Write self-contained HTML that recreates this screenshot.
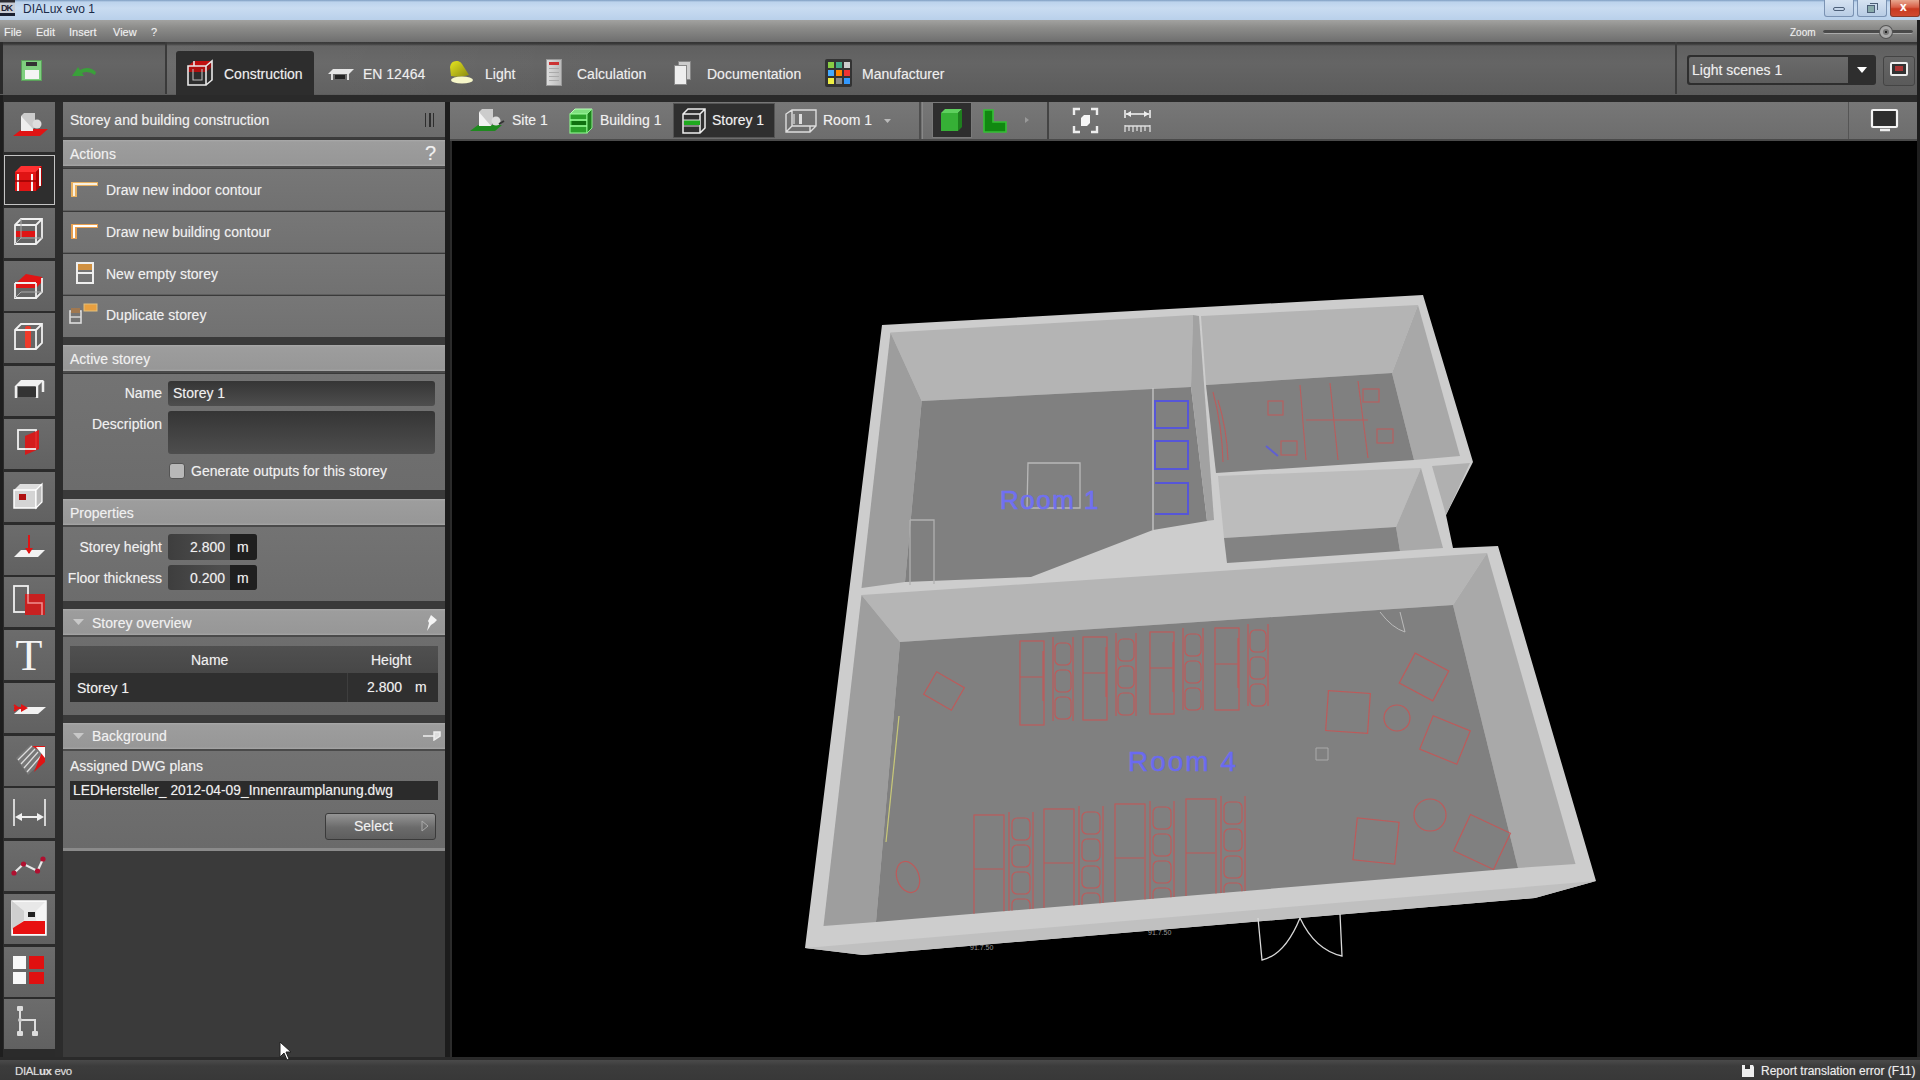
<!DOCTYPE html>
<html><head><meta charset="utf-8">
<style>
*{margin:0;padding:0;box-sizing:border-box}
html,body{width:1920px;height:1080px;overflow:hidden;background:#2b2b2b;font-family:"Liberation Sans",sans-serif;color:#f2f2f2}
.a{position:absolute}
.t{position:absolute;white-space:nowrap;color:#f0f0f0;line-height:1.15;text-shadow:0 0 1px rgba(255,255,255,.35)}
#title{left:0;top:0;width:1920px;height:20px;background:linear-gradient(#7d9cc0 0,#bcd3ec 2px,#c9dcf1 40%,#b9d0ea 100%)}
#menu{left:0;top:20px;width:1920px;height:22px;background:linear-gradient(#a2a2a0,#8c8c8a 35%,#6e6e6e 100%)}
#tool{left:0;top:42px;width:1920px;height:53px;background:linear-gradient(#333 0,#3a3a3a 2px,#606060 4px,#656565 40%,#5c5c5c 100%)}
#gap{left:0;top:95px;width:1920px;height:7px;background:#2a2a2a}
.ib{position:absolute;left:4px;width:51px;height:50px;background:linear-gradient(#6c6c6c,#616161)}
</style></head><body>
<!-- TITLE BAR -->
<div id="title" class="a">
  <div class="a" style="left:0;top:0;width:15px;height:16px;background:linear-gradient(#2a2a30 0,#2a2a30 2px,#c8ccd4 3px,#c8ccd4 13px,#1a2030 13px)"></div>
  <div class="t" style="left:1px;top:3px;font-size:9px;font-weight:bold;color:#223;text-shadow:none;letter-spacing:-1px">DK</div>
  <div class="t" style="left:23px;top:3px;font-size:12px;color:#1a2a48;text-shadow:none">DIALux evo 1</div>
  <div class="a" style="left:1824px;top:0;width:30px;height:17px;border:1px solid #7a92b2;border-top:none;border-radius:0 0 3px 3px;background:linear-gradient(#d6e3f2,#b8cce4)"></div>
  <div class="a" style="left:1833px;top:7px;width:12px;height:4px;border:1.5px solid #4c5f78;border-radius:2px"></div>
  <div class="a" style="left:1857px;top:0;width:30px;height:17px;border:1px solid #7a92b2;border-top:none;border-radius:0 0 3px 3px;background:linear-gradient(#d6e3f2,#b8cce4)"></div>
  <div class="a" style="left:1867px;top:5px;width:8px;height:8px;border:1.5px solid #4c5f78;background:#8aa"></div>
  <div class="a" style="left:1870px;top:3px;width:8px;height:7px;border:1.5px solid #4c5f78;border-left:none;border-bottom:none"></div>
  <div class="a" style="left:1890px;top:0;width:30px;height:17px;border:1px solid #8a3a2a;border-top:none;border-radius:0 0 3px 3px;background:linear-gradient(#e8a890,#d86048 45%,#c83a20 55%,#d04a30)"></div>
  <div class="t" style="left:1900px;top:1px;font-size:12px;font-weight:bold;color:#fff">x</div>
</div>
<!-- MENU -->
<div id="menu" class="a">
  <div class="t" style="left:4px;top:6px;font-size:11px">File</div>
  <div class="t" style="left:36px;top:6px;font-size:11px">Edit</div>
  <div class="t" style="left:69px;top:6px;font-size:11px">Insert</div>
  <div class="t" style="left:113px;top:6px;font-size:11px">View</div>
  <div class="t" style="left:151px;top:6px;font-size:11px">?</div>
  <div class="t" style="left:1790px;top:7px;font-size:10px;color:#eee">Zoom</div>
  <div class="a" style="left:1823px;top:10px;width:90px;height:4px;border-radius:2px;background:#4a4a4a;border-bottom:1px solid #aaa"></div>
  <div class="a" style="left:1880px;top:6px;width:12px;height:12px;border-radius:50%;background:#777;border:3px solid #aaa;box-shadow:0 0 0 1px #555"></div><div class="a" style="left:1885px;top:11px;width:2px;height:2px;background:#222"></div>
</div>
<!-- TOOLBAR -->
<div id="tool" class="a">
  <div class="a" style="left:0;top:0;width:3px;height:52px;background:#2a2a2a"></div>
  <div class="a" style="left:165px;top:0;width:2px;height:52px;background:#3a3a3a"></div>
  <div class="a" style="left:167px;top:0;width:1508px;height:52px;background:linear-gradient(90deg,rgba(255,255,255,.05),rgba(255,255,255,0) 30%)"></div>
  <div class="a" style="left:1675px;top:0;width:2px;height:52px;background:#3c3c3c"></div>
  <!-- save -->
  <div class="a" style="left:21px;top:18px;width:21px;height:21px;background:#7fd07f;border:1px solid #5aa05a"></div>
  <div class="a" style="left:26px;top:20px;width:11px;height:4px;background:#333"></div>
  <div class="a" style="left:25px;top:28px;width:14px;height:9px;background:#f4f4f4"></div>
  <!-- undo -->
  <svg class="a" style="left:71px;top:22px" width="28" height="14"><path d="M1 12 L7 3 L9 6 Q18 1 25 8 L24 11 Q17 6 11 9 L13 12 Z" fill="#3aa03a"/></svg>
  <!-- construction tab -->
  <div class="a" style="left:176px;top:9px;width:138px;height:44px;background:#2d2d2d;border-radius:3px 3px 0 0"></div>
  <svg class="a" style="left:185px;top:17px" width="30" height="30"><path d="M3 7 L9 2 H27 L21 7Z" fill="#c01010"/><rect x="3" y="7" width="18" height="6" fill="#b01010"/><path d="M21 7 L27 2 V8 L21 13Z" fill="#901010"/><path d="M3 7 H21 V26 H3Z M21 7 L27 2 V21 L21 26 M9 2 V7" fill="none" stroke="#e8e8e8" stroke-width="1.6"/><path d="M8 10 V21 H17 V10" fill="none" stroke="#bbb" stroke-width="1.1"/></svg>
  <div class="t" style="left:224px;top:24px;font-size:14px;color:#eee">Construction</div>
  <!-- EN 12464 -->
  <svg class="a" style="left:327px;top:24px" width="28" height="16"><path d="M1 8 L6 3 L27 3 L22 8 Z" fill="#e6e6e6"/><path d="M5 8 v6 M21 8 v6" stroke="#ddd" stroke-width="2"/><rect x="8" y="9" width="10" height="4" fill="#222"/></svg>
  <div class="t" style="left:363px;top:24px;font-size:14px;color:#eee">EN 12464</div>
  <!-- Light -->
  <svg class="a" style="left:447px;top:17px" width="30" height="30"><defs><linearGradient id="lg1" x1="0" y1="0" x2="1" y2="1"><stop offset="0" stop-color="#e6e620"/><stop offset="1" stop-color="#8a8a10"/></linearGradient></defs><path d="M3 8 Q4 1 11 2 Q14 3 15 5 L22 16 Q14 19 4 17 Z" fill="url(#lg1)"/><ellipse cx="15" cy="21" rx="11" ry="3.6" fill="#f6f6c8"/></svg>
  <div class="t" style="left:485px;top:24px;font-size:14px;color:#eee">Light</div>
  <!-- Calculation -->
  <div class="a" style="left:546px;top:17px;width:16px;height:27px;background:linear-gradient(90deg,#ddd,#bbb);border:1px solid #999"></div>
  <div class="a" style="left:549px;top:20px;width:10px;height:3px;background:#c33"></div>
  <div class="a" style="left:549px;top:26px;width:10px;height:15px;background:repeating-linear-gradient(#aaa 0 1px,transparent 1px 4px)"></div>
  <div class="t" style="left:577px;top:24px;font-size:14px;color:#eee">Calculation</div>
  <!-- Documentation -->
  <div class="a" style="left:678px;top:19px;width:13px;height:19px;background:#ccc;border:1px solid #888"></div>
  <div class="a" style="left:674px;top:23px;width:13px;height:20px;background:#eee;border:1px solid #888"></div>
  <div class="t" style="left:707px;top:24px;font-size:14px;color:#eee">Documentation</div>
  <!-- Manufacturer -->
  <div class="a" style="left:825px;top:17px;width:27px;height:28px;background:#333;border-radius:2px"></div>
  <svg class="a" style="left:827px;top:19px" width="24" height="24"><rect x="1" y="1" width="6" height="6" fill="#8c4"/><rect x="9" y="1" width="6" height="6" fill="#4a8"/><rect x="17" y="1" width="6" height="6" fill="#ccc"/><rect x="1" y="9" width="6" height="6" fill="#4af"/><rect x="9" y="9" width="6" height="6" fill="#f80"/><rect x="17" y="9" width="6" height="6" fill="#e33"/><rect x="1" y="17" width="6" height="6" fill="#ee4"/><rect x="9" y="17" width="6" height="6" fill="#888"/><rect x="17" y="17" width="6" height="6" fill="#39f"/></svg>
  <div class="t" style="left:862px;top:24px;font-size:14px;color:#eee">Manufacturer</div>
  <!-- Light scenes -->
  <div class="a" style="left:1687px;top:13px;width:189px;height:30px;background:#2e2e2e;border-radius:3px"></div>
  <div class="a" style="left:1689px;top:15px;width:159px;height:26px;background:linear-gradient(#6a6a6a,#5e5e5e);border-radius:2px 0 0 2px"></div>
  <div class="t" style="left:1692px;top:20px;font-size:14px;color:#eee">Light scenes 1</div>
  <svg class="a" style="left:1856px;top:24px" width="12" height="8"><path d="M1 1 H11 L6 7Z" fill="#fff"/></svg>
  <div class="a" style="left:1883px;top:14px;width:32px;height:30px;background:linear-gradient(#666,#5a5a5a);border:1px solid #444;border-radius:3px"></div>
  <div class="a" style="left:1890px;top:20px;width:18px;height:14px;border:2px solid #eee;background:#333;border-radius:2px"></div>
  <div class="a" style="left:1895px;top:24px;width:8px;height:5px;background:#a33"></div>
</div>
<div id="gap" class="a"></div>
<div class="a" style="left:0;top:95px;width:3px;height:965px;background:#1e1e1e"></div>
<div class="ib" style="top:102px"></div>
<div class="ib" style="top:155px;background:#2e2e2e;border:1px solid #c4c4c4"></div>
<div class="ib" style="top:208px"></div>
<div class="ib" style="top:261px"></div>
<div class="ib" style="top:313px"></div>
<div class="ib" style="top:366px"></div>
<div class="ib" style="top:419px"></div>
<div class="ib" style="top:472px"></div>
<div class="ib" style="top:525px"></div>
<div class="ib" style="top:577px"></div>
<div class="ib" style="top:630px"></div>
<div class="ib" style="top:683px"></div>
<div class="ib" style="top:736px"></div>
<div class="ib" style="top:788px"></div>
<div class="ib" style="top:841px"></div>
<div class="ib" style="top:894px"></div>
<div class="ib" style="top:947px"></div>
<div class="ib" style="top:999px"></div>
<svg class="a" style="left:0;top:0" width="60" height="1060">
<g transform="translate(4,102)"><path d="M9 34 L18 27 L44 27 L36 34 Z" fill="#e01414"/><rect x="17" y="14" width="12" height="15" fill="#eee"/><path d="M17 14 l3 -3 h11 v13 l-2 3" fill="#ccc"/><circle cx="33" cy="22" r="4.5" fill="#ddd"/></g>
<g transform="translate(4,155)"><path d="M11 17 L17 11 L38 11 L32 17Z" fill="#ff3030"/><rect x="11" y="17" width="21" height="19" fill="#e01414"/><path d="M32 17 L38 11 V30 L32 36Z" fill="#a00"/><path d="M14 19 V36 M28 19 V36 M36 13 V31" stroke="#f4f4f4" stroke-width="2"/><path d="M11 26 H32" stroke="#900" stroke-width="1.5"/></g>
<g transform="translate(4,208)"><rect x="11" y="23" width="21" height="6" fill="#e01414"/><path d="M11 17 L17 11 H38 V30 L32 36 H11 Z M11 17 H32 V36 M32 17 L38 11" fill="none" stroke="#f0f0f0" stroke-width="1.8"/><path d="M17 11 V30 H38 M17 30 L11 36" fill="none" stroke="#aaa" stroke-width="1"/></g>
<g transform="translate(4,261)"><path d="M11 23 L22 13 L38 16 V21 L32 27 H11Z" fill="#e01414"/><path d="M11 22 V37 H32 V22 M32 37 L38 31 V17 M11 22 H32" fill="none" stroke="#f0f0f0" stroke-width="1.8"/><path d="M17 31 H38 M17 31 L11 37" fill="none" stroke="#aaa" stroke-width="1"/></g>
<g transform="translate(4,313)"><rect x="21" y="13" width="6" height="22" rx="2" fill="#ee3a2a"/><path d="M11 17 L17 11 H38 V30 L32 36 H11 Z M11 17 H32 V36 M32 17 L38 11" fill="none" stroke="#f0f0f0" stroke-width="1.8"/></g>
<g transform="translate(4,366)"><path d="M11 20 L17 14 H40 L34 20Z" fill="#f0f0f0"/><path d="M12 20 V32 M33 20 V32 M39 15 V26" stroke="#eee" stroke-width="2.5"/><path d="M14 21 H32 V31 H14Z" fill="#333"/></g>
<g transform="translate(4,419)"><rect x="14" y="11" width="18" height="19" fill="none" stroke="#f0f0f0" stroke-width="1.8"/><path d="M21 17 L35 11 V30 L21 36Z" fill="#e01414" opacity=".9"/><path d="M14 30 H32" stroke="#f0f0f0" stroke-width="1.8"/></g>
<g transform="translate(4,472)"><path d="M10 18 L16 12 H38 L32 18Z" fill="#ddd"/><rect x="10" y="18" width="22" height="18" fill="#d4d4d4" stroke="#fff" stroke-width="1.5"/><path d="M32 18 L38 12 V30 L32 36Z" fill="#bbb" stroke="#fff" stroke-width="1.2"/><rect x="15" y="22" width="7" height="6" fill="#b01010"/></g>
<g transform="translate(4,525)"><path d="M10 32 L17 25 H41 L34 32Z" fill="#f2f2f2"/><path d="M25 10 V28" stroke="#e01414" stroke-width="2"/><path d="M21 23 L25 29 L29 23Z" fill="#e01414"/></g>
<g transform="translate(4,577)"><rect x="10" y="9" width="14" height="26" fill="none" stroke="#f0f0f0" stroke-width="1.8"/><rect x="21" y="17" width="20" height="21" fill="#c82020"/><path d="M24 17 V26 H38 V38" fill="none" stroke="#f09090" stroke-width="1.5"/></g>
<g transform="translate(4,630)"><text x="25" y="40" font-family="Liberation Serif" font-size="44" fill="#f4f4f4" text-anchor="middle">T</text></g>
<g transform="translate(4,683)"><path d="M10 31 L18 24 H42 L34 31Z" fill="#f2f2f2"/><path d="M10 25 L20 25" stroke="#e01414" stroke-width="2.2"/><path d="M17 21 L24 25 L17 29Z" fill="#e01414"/><path d="M10 22 L14 25 L10 28" fill="none" stroke="#e01414" stroke-width="2"/></g>
<g transform="translate(4,736)"><path d="M12 22 L26 9 L40 12 L38 26 L24 39Z" fill="#777"/><path d="M14 24 L28 10 M17 28 L31 13 M20 32 L34 16 M23 36 L37 20" stroke="#ddd" stroke-width="1.3"/><path d="M28 10 H41 V26 L30 36 L38 16Z" fill="#e01414"/><path d="M32 11 H41 V22Z" fill="#fafafa"/></g>
<g transform="translate(4,788)"><path d="M10 11 V38 M41 11 V38" stroke="#f0f0f0" stroke-width="1.6"/><path d="M13 29 H38" stroke="#f0f0f0" stroke-width="2"/><path d="M11 29 L18 25 V33Z M40 29 L33 25 V33Z" fill="#f0f0f0"/></g>
<g transform="translate(4,841)"><path d="M10 32 L19.5 23 L33.5 30 L39 18" fill="none" stroke="#e8e8e8" stroke-width="2.2"/><circle cx="10" cy="32" r="2.6" fill="#b01030"/><circle cx="19.5" cy="23" r="2.6" fill="#b01030"/><circle cx="33.5" cy="30" r="2.6" fill="#b01030"/><circle cx="39" cy="18" r="2.6" fill="#b01030"/></g>
<g transform="translate(4,894)"><rect x="8" y="7" width="34" height="34" fill="#e8e8e8" stroke="#fff" stroke-width="1.5"/><path d="M8 7 L20 17 V26 L8 36Z" fill="#cfcfcf"/><path d="M42 7 L32 17 V26 L42 36Z" fill="#f5f5f5"/><rect x="24" y="18" width="7" height="5" fill="#222"/><path d="M9 34 L20 27 H41 V40 H9Z" fill="#e81010"/></g>
<g transform="translate(4,947)"><rect x="9" y="9" width="13" height="13" fill="#f8f8f8"/><rect x="9" y="25" width="13" height="12" fill="#f8f8f8"/><rect x="25" y="9" width="15" height="13" fill="#e01010"/><rect x="25" y="25" width="15" height="12" fill="#e01010"/></g>
<g transform="translate(4,999)"><path d="M16 10 V36 M16 21 H31 V34" fill="none" stroke="#ddd" stroke-width="2"/><rect x="13" y="7" width="6" height="5" rx="1" fill="#ddd"/><rect x="13" y="32" width="6" height="5" rx="1" fill="#ddd"/><rect x="28" y="32" width="6" height="5" rx="1" fill="#ddd"/><circle cx="16" cy="21" r="2" fill="#ccc"/></g>
</svg><!-- PANEL -->
<div class="a" style="left:55px;top:102px;width:8px;height:955px;background:#2c2c2c"></div>
<div class="a" style="left:63px;top:102px;width:382px;height:955px;background:#3a3a3a"></div>
<div class="a" style="left:445px;top:102px;width:5px;height:955px;background:#1c1c1c"></div>
<!-- title -->
<div class="a" style="left:63px;top:102px;width:382px;height:37px;background:linear-gradient(#767676,#6c6c6c);border-bottom:2px solid #3c3c3c"></div>
<div class="t" style="left:70px;top:112px;font-size:14px">Storey and building construction</div>
<div class="a" style="left:425px;top:113px;width:9px;height:14px;border-left:1.5px solid #2e2e2e;border-right:1.5px solid #2e2e2e"></div>
<div class="a" style="left:429px;top:113px;width:1.5px;height:14px;background:#2e2e2e"></div>
<!-- actions -->
<div class="a" style="left:63px;top:140px;width:382px;height:28px;background:linear-gradient(#aaaaaa 0,#9d9d9d 2px,#979797 92%,#a6a6a6 100%);border-bottom:2px solid #4a4a4a"></div>
<div class="t" style="left:70px;top:146px;font-size:14px">Actions</div>
<div class="t" style="left:425px;top:142px;font-size:20px;color:#f0f0f0">?</div>
<div class="a" style="left:63px;top:169px;width:382px;height:42px;background:linear-gradient(#777,#717171);border-bottom:1px solid #5e5e5e"></div>
<div class="a" style="left:63px;top:212px;width:382px;height:41px;background:linear-gradient(#777,#717171);border-bottom:1px solid #5e5e5e"></div>
<div class="a" style="left:63px;top:254px;width:382px;height:41px;background:linear-gradient(#777,#717171);border-bottom:1px solid #5e5e5e"></div>
<div class="a" style="left:63px;top:296px;width:382px;height:41px;background:linear-gradient(#777,#717171)"></div>
<svg class="a" style="left:68px;top:178px" width="32" height="150">
  <path d="M3 4 H30 V8 H9 V19 H3Z" fill="#e8b060"/><path d="M5 5 H29 V7 H7 V18 H5Z" fill="#f8f0e0"/>
  <path d="M3 46 H30 V50 H9 V61 H3Z" fill="#e8a050"/><path d="M5 47 H29 V49 H7 V60 H5Z" fill="#fff"/>
  <rect x="9" y="85" width="16" height="20" fill="none" stroke="#eee" stroke-width="2"/><rect x="10" y="86" width="14" height="6" fill="#d09040"/><path d="M10 95 H24" stroke="#eee" stroke-width="2"/>
  <rect x="2" y="133" width="11" height="12" fill="none" stroke="#ddd" stroke-width="1.6"/><rect x="3" y="130" width="9" height="5" fill="#a07850"/><path d="M2 139 H13" stroke="#ddd" stroke-width="1.4"/><rect x="16" y="126" width="13" height="7" fill="#e8a040" stroke="#e0c080" stroke-width="1"/>
</svg>
<div class="t" style="left:106px;top:182px;font-size:14px">Draw new indoor contour</div>
<div class="t" style="left:106px;top:224px;font-size:14px">Draw new building contour</div>
<div class="t" style="left:106px;top:266px;font-size:14px">New empty storey</div>
<div class="t" style="left:106px;top:307px;font-size:14px">Duplicate storey</div>
<!-- active storey -->
<div class="a" style="left:63px;top:345px;width:382px;height:28px;background:linear-gradient(#aaaaaa 0,#9d9d9d 2px,#979797 92%,#a6a6a6 100%);border-bottom:2px solid #4a4a4a"></div>
<div class="t" style="left:70px;top:351px;font-size:14px">Active storey</div>
<div class="a" style="left:63px;top:374px;width:382px;height:116px;background:linear-gradient(#737373,#6c6c6c)"></div>
<div class="t" style="left:63px;top:385px;width:99px;text-align:right;font-size:14px">Name</div>
<div class="a" style="left:168px;top:381px;width:267px;height:25px;border-radius:3px;background:linear-gradient(#353535,#4e4e4e)"></div>
<div class="t" style="left:173px;top:385px;font-size:14px">Storey 1</div>
<div class="t" style="left:63px;top:416px;width:99px;text-align:right;font-size:14px">Description</div>
<div class="a" style="left:168px;top:411px;width:267px;height:43px;border-radius:3px;background:linear-gradient(#353535,#4e4e4e)"></div>
<div class="a" style="left:169px;top:463px;width:16px;height:16px;border-radius:3px;background:#b8b8b8;border:1px solid #555"></div>
<div class="t" style="left:191px;top:463px;font-size:14px">Generate outputs for this storey</div>
<!-- properties -->
<div class="a" style="left:63px;top:499px;width:382px;height:28px;background:linear-gradient(#aaaaaa 0,#9d9d9d 2px,#979797 92%,#a6a6a6 100%);border-bottom:2px solid #4a4a4a"></div>
<div class="t" style="left:70px;top:505px;font-size:14px">Properties</div>
<div class="a" style="left:63px;top:527px;width:382px;height:74px;background:linear-gradient(#737373,#6c6c6c)"></div>
<div class="t" style="left:63px;top:539px;width:99px;text-align:right;font-size:14px">Storey height</div>
<div class="a" style="left:168px;top:534px;width:89px;height:26px;border-radius:3px;background:linear-gradient(90deg,#3e3e3e,#4e4e4e 60%)"></div>
<div class="a" style="left:230px;top:534px;width:27px;height:26px;border-radius:0 3px 3px 0;background:#1f1f1f"></div>
<div class="t" style="left:168px;top:539px;width:57px;text-align:right;font-size:14px">2.800</div>
<div class="t" style="left:237px;top:539px;font-size:14px">m</div>
<div class="t" style="left:63px;top:570px;width:99px;text-align:right;font-size:14px">Floor thickness</div>
<div class="a" style="left:168px;top:565px;width:89px;height:25px;border-radius:3px;background:linear-gradient(90deg,#3e3e3e,#4e4e4e 60%)"></div>
<div class="a" style="left:230px;top:565px;width:27px;height:25px;border-radius:0 3px 3px 0;background:#1f1f1f"></div>
<div class="t" style="left:168px;top:570px;width:57px;text-align:right;font-size:14px">0.200</div>
<div class="t" style="left:237px;top:570px;font-size:14px">m</div>
<!-- storey overview -->
<div class="a" style="left:63px;top:609px;width:382px;height:28px;background:linear-gradient(#aaaaaa 0,#9d9d9d 2px,#979797 92%,#a6a6a6 100%);border-bottom:2px solid #4a4a4a"></div>
<svg class="a" style="left:73px;top:619px" width="12" height="8"><path d="M0 0 H11 L5.5 6Z" fill="#c8c8c8"/></svg>
<div class="t" style="left:92px;top:615px;font-size:14px">Storey overview</div>
<svg class="a" style="left:423px;top:614px" width="16" height="20"><path d="M8 1 L14 6 L11 9 L8 11 L4 17 L6 9 L5 7Z" fill="#f4f4f4"/></svg>
<div class="a" style="left:63px;top:637px;width:382px;height:78px;background:linear-gradient(#6e6e6e,#666)"></div>
<div class="a" style="left:70px;top:646px;width:368px;height:27px;background:linear-gradient(#505050,#474747)"></div>
<div class="t" style="left:191px;top:652px;font-size:14px">Name</div>
<div class="t" style="left:371px;top:652px;font-size:14px">Height</div>
<div class="a" style="left:70px;top:673px;width:368px;height:29px;background:#2f2f2f"></div>
<div class="a" style="left:347px;top:673px;width:1px;height:29px;background:#3e3e3e"></div>
<div class="t" style="left:77px;top:680px;font-size:14px">Storey 1</div>
<div class="t" style="left:367px;top:679px;font-size:14px">2.800</div>
<div class="t" style="left:415px;top:679px;font-size:14px">m</div>
<!-- background -->
<div class="a" style="left:63px;top:723px;width:382px;height:28px;background:linear-gradient(#aaaaaa 0,#9d9d9d 2px,#979797 92%,#a6a6a6 100%);border-bottom:2px solid #4a4a4a"></div>
<svg class="a" style="left:73px;top:733px" width="12" height="8"><path d="M0 0 H11 L5.5 6Z" fill="#c8c8c8"/></svg>
<div class="t" style="left:92px;top:728px;font-size:14px">Background</div>
<svg class="a" style="left:422px;top:731px" width="20" height="10"><path d="M1 5 H12 M12 1 V9 L18 5 V1 Z" stroke="#eee" stroke-width="1.5" fill="#ddd"/></svg>
<div class="a" style="left:63px;top:751px;width:382px;height:97px;background:linear-gradient(#727272,#6a6a6a)"></div>
<div class="t" style="left:70px;top:758px;font-size:14px">Assigned DWG plans</div>
<div class="a" style="left:70px;top:781px;width:368px;height:19px;background:#2b2b2b"></div>
<div class="t" style="left:73px;top:783px;font-size:13.8px">LEDHersteller_ 2012-04-09_Innenraumplanung.dwg</div>
<div class="a" style="left:325px;top:813px;width:111px;height:27px;border-radius:3px;border:1px solid #3a3a3a;background:linear-gradient(#959595,#6a6a6a 55%,#5e5e5e)"></div>
<div class="t" style="left:354px;top:818px;font-size:14px">Select</div>
<svg class="a" style="left:421px;top:820px" width="8" height="12"><path d="M1 1 L7 6 L1 11Z" fill="none" stroke="#aaa" stroke-width="1"/></svg>
<div class="a" style="left:63px;top:848px;width:382px;height:3px;background:#8a8a8a"></div>
<!-- VIEWPORT TOOLBAR -->
<div class="a" style="left:450px;top:102px;width:1467px;height:37px;background:linear-gradient(#777,#6d6d6d)"></div>
<div class="a" style="left:450px;top:139px;width:1467px;height:2px;background:#4a4a4a"></div>
<div class="a" style="left:1917px;top:20px;width:3px;height:1037px;background:#1e1e1e"></div>
<!-- site -->
<svg class="a" style="left:468px;top:107px" width="40" height="28"><path d="M2 24 L10 18 H34 L27 24Z" fill="#1f8a1f"/><rect x="11" y="5" width="12" height="14" fill="#f2f2f2"/><path d="M11 5 l3 -3 h11 v13 l-2 4" fill="#ccc"/><circle cx="28" cy="14" r="4.5" fill="#ddd"/><path d="M31 17 L36 14" stroke="#333" stroke-width="2"/></svg>
<div class="t" style="left:512px;top:112px;font-size:14px">Site 1</div>
<!-- building -->
<svg class="a" style="left:567px;top:107px" width="28" height="28"><path d="M3 7 L8 2 H25 L20 7Z" fill="#7fe07f" stroke="#bfb" stroke-width="1"/><rect x="3" y="7" width="17" height="19" fill="#2aa02a" stroke="#8e8" stroke-width="1.2"/><path d="M20 7 L25 2 V21 L20 26Z" fill="#1d801d" stroke="#8e8" stroke-width="1"/><path d="M3 13 H20 M3 19 H20" stroke="#9f9" stroke-width="1.3"/><rect x="5" y="14" width="14" height="4" fill="#107010"/></svg>
<div class="t" style="left:600px;top:112px;font-size:14px">Building 1</div>
<!-- storey (selected) -->
<div class="a" style="left:673px;top:103px;width:102px;height:35px;background:#2f2f2f;border:1px solid #555"></div>
<svg class="a" style="left:680px;top:107px" width="28" height="28"><path d="M3 7 L8 2 H25 V21 L20 26 H3Z M3 7 H20 V26 M20 7 L25 2" fill="none" stroke="#eee" stroke-width="1.5"/><rect x="4" y="13" width="16" height="5" fill="#1eaa1e"/><path d="M3 13 H20 M3 19 H20" stroke="#ddd" stroke-width="1"/></svg>
<div class="t" style="left:712px;top:112px;font-size:14px">Storey 1</div>
<!-- room -->
<svg class="a" style="left:784px;top:108px" width="34" height="26"><path d="M2 6 L8 2 H32 V18 L26 24 H2Z M2 6 V24 M26 18 V24 M8 2 V18 H32 M8 18 L2 24" fill="none" stroke="#ddd" stroke-width="1.4"/><rect x="15" y="6" width="3" height="10" fill="#ddd"/><path d="M10 6 V16" stroke="#ddd" stroke-width="1.2"/></svg>
<div class="t" style="left:823px;top:112px;font-size:14px">Room 1</div>
<svg class="a" style="left:884px;top:119px" width="8" height="5"><path d="M0 0 H7 L3.5 4Z" fill="#bbb"/></svg>
<div class="a" style="left:919px;top:102px;width:2px;height:37px;background:#4e4e4e"></div>
<div class="a" style="left:922px;top:102px;width:1px;height:37px;background:#888"></div>
<!-- green cube -->
<div class="a" style="left:932px;top:102px;width:40px;height:36px;background:#2e2e2e;border:1px solid #7a7a7a"></div>
<svg class="a" style="left:938px;top:107px" width="28" height="26"><path d="M3 6 L7 2 H24 L20 6Z" fill="#5ed05e"/><rect x="3" y="6" width="17" height="18" fill="#36b036"/><path d="M20 6 L24 2 V20 L20 24Z" fill="#1e801e"/></svg>
<svg class="a" style="left:982px;top:108px" width="28" height="26"><path d="M2 2 H11 V14 H24 V24 H2Z" fill="#118811" stroke="#35c035" stroke-width="1.6"/></svg>
<svg class="a" style="left:1024px;top:116px" width="6" height="8"><path d="M1 1 L5 4 L1 7Z" fill="#999"/></svg>
<div class="a" style="left:1047px;top:102px;width:2px;height:37px;background:#444"></div>
<!-- fullscreen -->
<svg class="a" style="left:1072px;top:107px" width="27" height="27"><path d="M2 8 V2 H8 M19 2 H25 V8 M25 19 V25 H19 M8 25 H2 V19" fill="none" stroke="#eee" stroke-width="2.4"/><path d="M9 11 L12 8 H18 V16 L15 19 H9Z" fill="#f6f6f6"/></svg>
<!-- ruler -->
<svg class="a" style="left:1123px;top:108px" width="30" height="26"><path d="M3 6 H26" stroke="#eee" stroke-width="1.6"/><path d="M2 2 V10 M27 2 V10" stroke="#eee" stroke-width="1.6"/><path d="M3 6 L8 3 V9Z M26 6 L21 3 V9Z" fill="#eee"/><path d="M2 18 H27 M2 17 V24 M6 18 V23 M10 18 V24 M14 18 V23 M18 18 V24 M22 18 V23 M27 17 V24" stroke="#ddd" stroke-width="1.3" fill="none"/></svg>
<div class="a" style="left:1848px;top:102px;width:1px;height:37px;background:#555"></div>
<svg class="a" style="left:1870px;top:108px" width="30" height="26"><rect x="2" y="2" width="25" height="17" fill="#2e2e2e" stroke="#f4f4f4" stroke-width="2.2" rx="1"/><path d="M10 22 H20" stroke="#eee" stroke-width="2.5"/></svg>
<!-- STATUS BAR -->
<div class="a" style="left:0;top:1057px;width:1920px;height:3px;background:#2a2a2a"></div>
<div class="a" style="left:0;top:1060px;width:1920px;height:20px;background:linear-gradient(#4a4a4a,#3c3c3c 30%,#383838)"></div>
<div class="t" style="left:15px;top:1065px;font-size:11.5px;color:#ddd;letter-spacing:-0.4px">DIAL<b>ux</b> evo</div>
<svg class="a" style="left:1741px;top:1064px" width="14" height="14"><path d="M1 1 H12 L13 3 V13 H1Z" fill="#eee"/><rect x="4" y="1" width="5" height="4" fill="#333"/></svg>
<div class="t" style="left:1761px;top:1065px;font-size:12px;color:#eee">Report translation error (F11)</div>
<div class="a" style="left:452px;top:141px;width:1465px;height:916px;background:#000"></div>
<svg class="a" style="left:0;top:0" width="1920" height="1080">
<polygon points="882,325 1423,295 1473,462 1446,515 1453,548 1498,546 1596,881 1535,898 863,955 805,948" fill="#cdcdcd" />
<polygon points="805,948 1596,881 1535,898 863,955" fill="#c0c0c0" />
<polygon points="890.5,332.5 1193,315 1191,387 921.7,401" fill="#b4b4b4" />
<polygon points="890.5,332.5 921.7,401 905,582 861.5,588" fill="#9d9d9d" />
<polygon points="921.7,401 1191,387 1207,521 1153,530 1031,577 905,582" fill="#808080" />
<polygon points="1193,315 1199,316 1214,520 1207,521 1191,387" fill="#a2a2a2" />
<polygon points="1201,316 1418,305 1392,373 1206,385" fill="#b4b4b4" />
<polygon points="1418,305 1460,456 1414,460 1392,373" fill="#a8a8a8" />
<polygon points="1206,385 1392,373 1414,460 1216,473" fill="#808080" />
<polygon points="1432,466 1470,463 1446,515" fill="#b0b0b0" />
<polygon points="1218,476 1421,468 1396,527 1224,538" fill="#bcbcbc" />
<polygon points="1421,468 1443,548 1400,551 1396,527" fill="#a9a9a9" />
<polygon points="1224,538 1396,527 1400,551 1227,563" fill="#838383" />
<polygon points="861.5,595 1487,553 1453,605 900,642" fill="#b5b5b5" />
<polygon points="861.5,595 900,642 876,922 823.5,926" fill="#9e9e9e" />
<polygon points="1487,553 1575.5,864 1518,868 1453,605" fill="#a9a9a9" />
<polygon points="900,642 1453,605 1518,868 876,922" fill="#808080" />
<g fill="none" stroke-width="1.3">
<path d="M1153 388 V530" stroke="#c8c8c8"/>
<path d="M1028 463 H1080 V508 H1027Z" stroke="#b8b8b8"/>
<path d="M910 520 H934 V584 M910 520 V585" stroke="#b0b0b0"/>
<g stroke="#5656d8" stroke-width="2"><path d="M1155 401 H1188 V428 H1155 Z"/><path d="M1155 441 H1188 V469 H1155Z"/><path d="M1155 483 H1188 V514 H1155"/></g>
</g>
<text x="1000" y="509" font-family="Liberation Sans" font-size="26" letter-spacing="1.5" fill="#7070f0" stroke="#7070f0" stroke-width="0.6">Room 1</text>
<g fill="none" stroke="#c85454" stroke-width="1.1" stroke-opacity=".8">
<path d="M1213 392 Q1222 425 1223 462"/><path d="M1218 400 Q1227 430 1228 460"/>
<rect x="1268" y="401" width="15" height="14"/><rect x="1363" y="389" width="16" height="13"/><rect x="1377" y="429" width="16" height="14"/><rect x="1281" y="441" width="16" height="14"/>
<path d="M1300 385 L1306 460 M1330 383 L1338 460 M1358 381 L1368 458 M1306 420 H1368"/>
</g>
<path d="M1266 446 L1278 456" stroke="#6060d0" stroke-width="2"/>
<defs><clipPath id="fl2"><polygon points="900,642 1453,605 1518,868 876,922"/></clipPath></defs>
<g fill="none" stroke="#c85454" stroke-width="1.2" stroke-opacity=".85" clip-path="url(#fl2)">
<rect x="1020" y="641" width="24" height="84"/>
<path d="M1020 677 H1043 M1043 651 V701"/>
<path d="M1053 637 V721 M1073 637 V721"/>
<rect x="1055" y="643" width="16" height="22" rx="5"/>
<rect x="1055" y="670" width="16" height="22" rx="5"/>
<rect x="1055" y="697" width="16" height="22" rx="5"/>
<rect x="1083" y="637" width="24" height="83"/>
<path d="M1083 673 H1106 M1106 647 V697"/>
<path d="M1116 633 V716 M1136 633 V716"/>
<rect x="1118" y="639" width="16" height="22" rx="5"/>
<rect x="1118" y="666" width="16" height="22" rx="5"/>
<rect x="1118" y="693" width="16" height="22" rx="5"/>
<rect x="1150" y="632" width="24" height="82"/>
<path d="M1150 668 H1173 M1173 642 V692"/>
<path d="M1183 628 V710 M1203 628 V710"/>
<rect x="1185" y="634" width="16" height="22" rx="5"/>
<rect x="1185" y="661" width="16" height="22" rx="5"/>
<rect x="1185" y="688" width="16" height="22" rx="5"/>
<rect x="1215" y="628" width="24" height="82"/>
<path d="M1215 664 H1238 M1238 638 V688"/>
<path d="M1248 624 V706 M1268 624 V706"/>
<rect x="1250" y="630" width="16" height="22" rx="5"/>
<rect x="1250" y="657" width="16" height="22" rx="5"/>
<rect x="1250" y="684" width="16" height="22" rx="5"/>
<rect x="974" y="815" width="30" height="110"/>
<path d="M974 869 H1003"/>
<path d="M1009 812 V925 M1033 812 V925"/>
<rect x="1012" y="818" width="18" height="22" rx="5"/>
<rect x="1012" y="845" width="18" height="22" rx="5"/>
<rect x="1012" y="872" width="18" height="22" rx="5"/>
<rect x="1012" y="899" width="18" height="22" rx="5"/>
<rect x="1044" y="809" width="30" height="110"/>
<path d="M1044 863 H1073"/>
<path d="M1079 806 V919 M1103 806 V919"/>
<rect x="1082" y="812" width="18" height="22" rx="5"/>
<rect x="1082" y="839" width="18" height="22" rx="5"/>
<rect x="1082" y="866" width="18" height="22" rx="5"/>
<rect x="1082" y="893" width="18" height="22" rx="5"/>
<rect x="1115" y="804" width="30" height="110"/>
<path d="M1115 858 H1144"/>
<path d="M1150 801 V914 M1174 801 V914"/>
<rect x="1153" y="807" width="18" height="22" rx="5"/>
<rect x="1153" y="834" width="18" height="22" rx="5"/>
<rect x="1153" y="861" width="18" height="22" rx="5"/>
<rect x="1153" y="888" width="18" height="22" rx="5"/>
<rect x="1186" y="799" width="30" height="110"/>
<path d="M1186 853 H1215"/>
<path d="M1221 796 V909 M1245 796 V909"/>
<rect x="1224" y="802" width="18" height="22" rx="5"/>
<rect x="1224" y="829" width="18" height="22" rx="5"/>
<rect x="1224" y="856" width="18" height="22" rx="5"/>
<rect x="1224" y="883" width="18" height="22" rx="5"/>
</g><g fill="none" stroke="#c85454" stroke-width="1.2" stroke-opacity=".85">
<rect x="1327" y="692" width="42" height="40" transform="rotate(4 1348 712)"/>
<circle cx="1397" cy="718" r="13"/>
<rect x="1405" y="660" width="38" height="34" transform="rotate(28 1424 677)"/>
<rect x="1425" y="722" width="40" height="36" transform="rotate(22 1445 740)"/>
<circle cx="1430" cy="815" r="16"/>
<rect x="1355" y="820" width="42" height="42" transform="rotate(6 1376 841)"/>
<rect x="1460" y="822" width="44" height="40" transform="rotate(25 1482 842)"/>
<rect x="928" y="678" width="32" height="26" transform="rotate(30 944 691)"/>
<ellipse cx="908" cy="877" rx="11" ry="16" transform="rotate(-20 908 877)"/>
</g>
<path d="M899 716 L886 842" stroke="#c8c878" stroke-width="1.2" fill="none"/>
<path d="M1316 748 h12 v12 h-12z" stroke="#aaa" stroke-width="1" fill="none"/>
<path d="M1380 612 Q1392 628 1405 632 L1400 612" stroke="#bbb" stroke-width="1" fill="none"/>
<text x="1128" y="771" font-family="Liberation Sans" font-size="28" fill="#6a6af0" stroke="#6a6af0" stroke-width="0.4" letter-spacing="2">Room 4</text>
<path d="M1258 918 L1262 960 Q1285 955 1300 918 Q1315 950 1342 956 L1340 914" stroke="#d8d8d8" stroke-width="1.3" fill="none"/>
<text x="970" y="950" font-family="Liberation Sans" font-size="7" fill="#999">91.7.50</text>
<text x="1148" y="935" font-family="Liberation Sans" font-size="7" fill="#999">91.7.50</text>
</svg><svg class="a" style="left:279px;top:1041px" width="14" height="20"><path d="M1 1 V16 L5 12 L8 19 L10 18 L7 11 H12Z" fill="#fff" stroke="#222" stroke-width="1"/></svg>
</body></html>
